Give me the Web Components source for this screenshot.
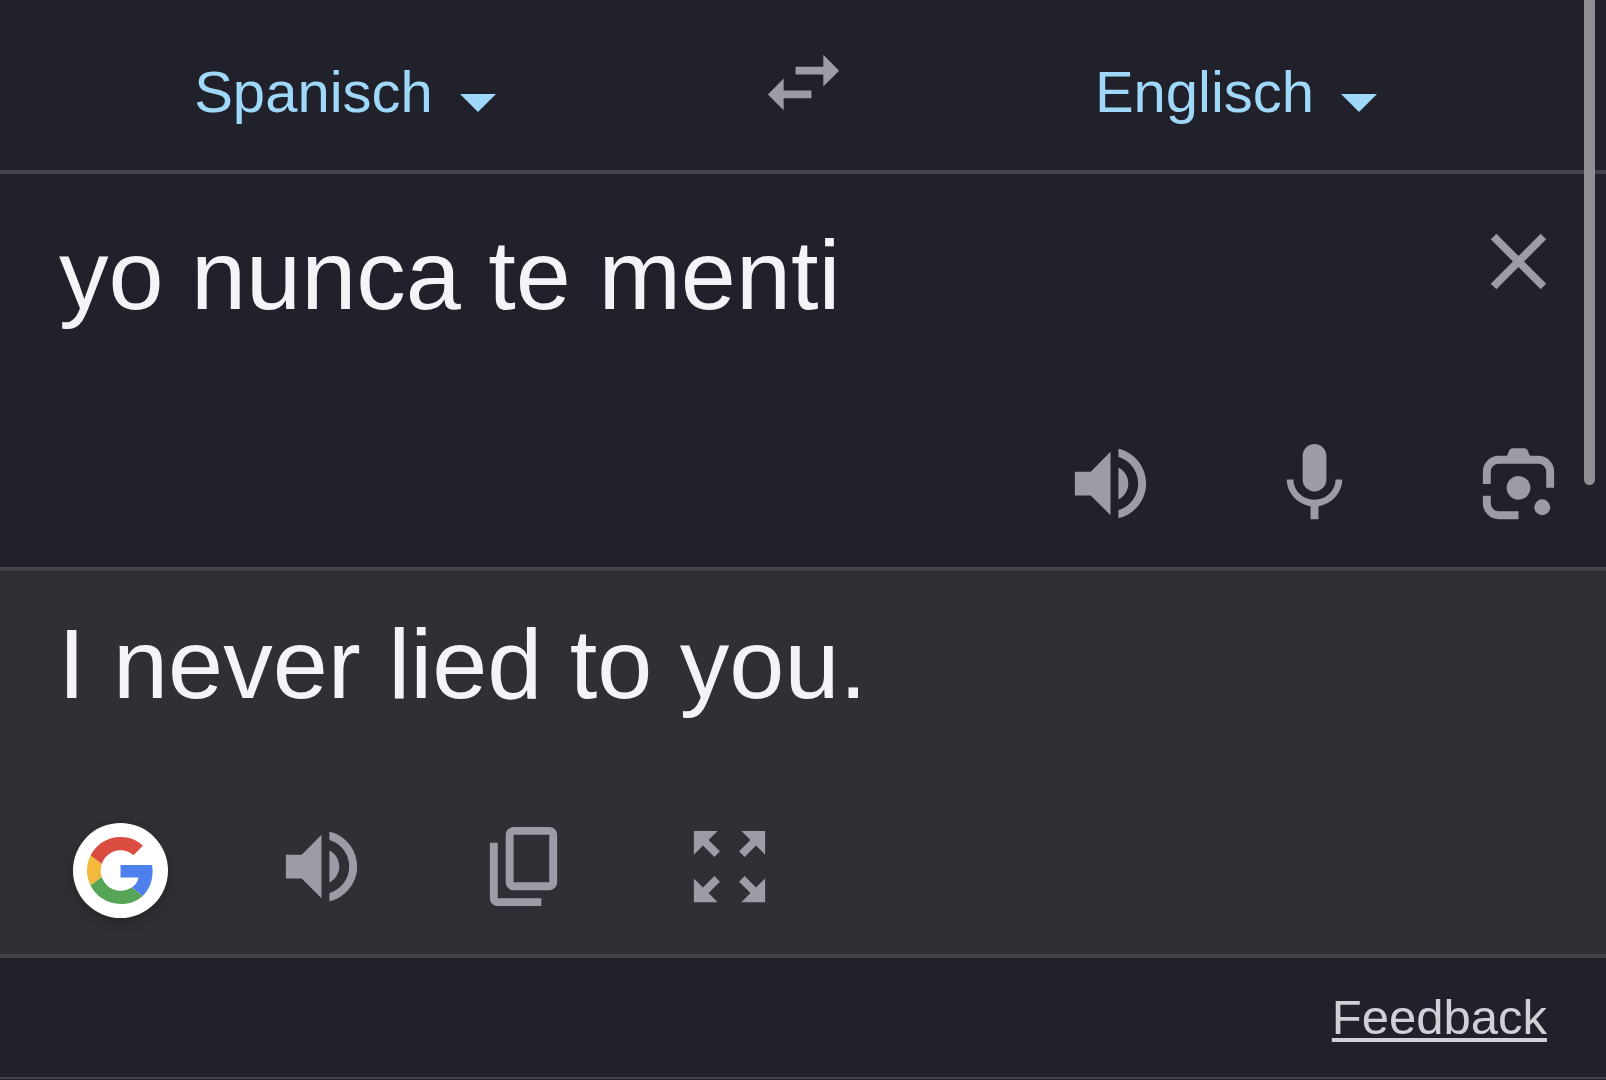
<!DOCTYPE html>
<html lang="de">
<head>
<meta charset="utf-8">
<meta name="viewport" content="width=device-width, initial-scale=1">
<title>Übersetzer</title>
<style>
  :root {
    --bg: #20212a;
    --surface: #2f3035;
    --line: #434348;
    --icon: #9c9ca6;
    --text: #f4f4f8;
    --accent: #a0d8fa;
    --link: #d0d0d6;
  }
  html { background: var(--bg); }
  body { margin: 0; font-family: "Liberation Sans", Arial, sans-serif; color: var(--text); }
</style>
</head>
<body>
<translate-card></translate-card>

<script>
const ICONS = {
  swap: '<path d="M6.99 11L3 15l3.99 4v-3H14v-2H6.99v-3zM21 9l-3.99-4v3H10v2h7.01v3L21 9z"/>',
  close: '<path d="M19 6.41L17.59 5 12 10.59 6.41 5 5 6.41 10.59 12 5 17.59 6.41 19 12 13.41 17.59 19 19 17.59 13.41 12z"/>',
  volume: '<path d="M3 9v6h4l5 5V4L7 9H3zM16.5 12c0-1.77-1.02-3.29-2.5-4.03v8.05c1.48-.73 2.5-2.25 2.5-4.02zM14 3.23v2.06c2.89.86 5 3.54 5 6.71s-2.11 5.85-5 6.71v2.06c4.01-.91 7-4.49 7-8.77s-2.99-7.86-7-8.77z"/>',
  mic: '<path d="M12 14c1.66 0 3-1.34 3-3V5c0-1.66-1.34-3-3-3S9 3.34 9 5v6c0 1.66 1.34 3 3 3zm5.3-3c0 3-2.54 5.1-5.3 5.1S6.7 14 6.7 11H5c0 3.41 2.72 6.23 6 6.72V21h2v-3.28c3.28-.48 6-3.3 6-6.72h-1.7z"/>',
  lens: '<path d="M4 12.1V9a3 3 0 0 1 3-3h10a3 3 0 0 1 3 3v4.1M4 15.1V17a3 3 0 0 0 3 3h5" fill="none" stroke="currentColor" stroke-width="2"/><path d="M8.9 5.5l.8-1.9q.25-.5.8-.5h3q.55 0 .8.5l.8 1.9z"/><circle cx="12" cy="13.1" r="3"/><circle cx="18" cy="18" r="2"/>',
  copy: '<path d="M18 2H9c-1.1 0-2 .9-2 2v12c0 1.1.9 2 2 2h9c1.1 0 2-.9 2-2V4c0-1.1-.9-2-2-2zm0 14H9V4h9v12zM3 6h2v14h11v2H5c-1.1 0-2-.9-2-2z"/>',
  expand: '<path d="M15 3l2.3 2.3-2.89 2.87 1.42 1.42L18.7 6.7 21 9V3h-6zM3 9l2.3-2.3 2.87 2.89 1.42-1.42L6.7 5.3 9 3H3v6zm6 12l-2.3-2.3 2.89-2.87-1.42-1.42L5.3 17.3 3 15v6h6zm12-6l-2.3 2.3-2.87-2.89-1.42 1.42 2.89 2.87L15 21h6v-6z"/>'
};

class IconButton extends HTMLElement {
  constructor() {
    super();
    this.attachShadow({ mode: 'open' });
  }
  connectedCallback() {
    this.shadowRoot.innerHTML = `
      <style>
        :host { display: block; flex: none; width: 95px; height: 95px; }
        button { display: block; width: 100%; height: 100%; margin: 0; padding: 0; border: 0; background: none; color: var(--icon); cursor: pointer; }
        svg { display: block; width: 100%; height: 100%; fill: currentColor; }
      </style>
      <button type="button" aria-label="${this.getAttribute('label')}">
        <svg viewBox="0 0 24 24" aria-hidden="true">${ICONS[this.getAttribute('icon')]}</svg>
      </button>`;
  }
}
customElements.define('icon-button', IconButton);

class LanguageSelect extends HTMLElement {
  constructor() {
    super();
    this.attachShadow({ mode: 'open' });
  }
  connectedCallback() {
    const value = this.getAttribute('value');
    this.shadowRoot.innerHTML = `
      <style>
        :host { display: flex; justify-content: center; }
        label { display: flex; align-items: baseline; gap: 27px; color: var(--accent); cursor: pointer; }
        select { appearance: none; field-sizing: content; margin: 0; padding: 0; border: 0; outline: 0; background: none; color: inherit; font: 58px/76px "Liberation Sans", Arial, sans-serif; cursor: pointer; }
        svg { display: block; flex: none; width: 36px; height: 18px; fill: currentColor; }
      </style>
      <label>
        <select aria-label="${this.getAttribute('label')}"><option selected>${value}</option></select>
        <svg viewBox="0 0 36 18" aria-hidden="true"><path d="M0 0h36L18 18z"/></svg>
      </label>`;
  }
}
customElements.define('language-select', LanguageSelect);

class LanguageBar extends HTMLElement {
  constructor() {
    super();
    this.attachShadow({ mode: 'open' }).innerHTML = `
      <style>
        :host { display: grid; grid-template-columns: 1fr 226px 1fr; align-items: end; justify-items: center; padding: 35px 0 40px; border-bottom: 4px solid var(--line); }
        .to { padding-right: 50px; }
      </style>
      <language-select label="Ausgangssprache" value="Spanisch"></language-select>
      <icon-button icon="swap" label="Sprachen tauschen"></icon-button>
      <language-select class="to" label="Zielsprache" value="Englisch"></language-select>`;
  }
}
customElements.define('language-bar', LanguageBar);

class SourcePanel extends HTMLElement {
  constructor() {
    super();
    this.attachShadow({ mode: 'open' }).innerHTML = `
      <style>
        :host { display: block; padding: 40px 40px 36px 59px; border-bottom: 4px solid var(--line); }
        .entry { display: flex; align-items: flex-start; }
        textarea { display: block; flex: 1; min-width: 0; height: 222px; box-sizing: border-box; margin: 0; padding: 0; border: 0; outline: 0; resize: none; overflow: hidden; background: none; color: var(--text); font: 99px/122px "Liberation Sans", Arial, sans-serif; }
        .actions { display: flex; justify-content: flex-end; gap: 109px; }
      </style>
      <div class="entry">
        <textarea aria-label="Ausgangstext" spellcheck="false">yo nunca te menti</textarea>
        <icon-button icon="close" label="Text löschen"></icon-button>
      </div>
      <div class="actions">
        <icon-button icon="volume" label="Anhören"></icon-button>
        <icon-button icon="mic" label="Spracheingabe"></icon-button>
        <icon-button icon="lens" label="Kamera"></icon-button>
      </div>`;
  }
}
customElements.define('source-panel', SourcePanel);

class SearchBadge extends HTMLElement {
  constructor() {
    super();
    this.attachShadow({ mode: 'open' }).innerHTML = `
      <style>
        :host { display: block; flex: none; }
        button { display: block; width: 95px; height: 95px; margin: 0; padding: 14px; border: 0; border-radius: 50%; background: #fff; box-shadow: 0 4px 12px rgba(0, 0, 0, .25); cursor: pointer; }
        svg { display: block; width: 100%; height: 100%; }
      </style>
      <button type="button" aria-label="Google">
        <svg viewBox="0 0 48 48" aria-hidden="true">
          <path fill="#d94c3f" d="M24 9.5c3.54 0 6.71 1.22 9.21 3.6l6.85-6.85C35.9 2.38 30.47 0 24 0 14.62 0 6.51 5.38 2.56 13.22l7.98 6.19C12.43 13.72 17.74 9.5 24 9.5z"/>
          <path fill="#4d80ec" d="M46.98 24.55c0-1.57-.15-3.09-.38-4.55H24v9.02h12.94c-.58 2.96-2.26 5.48-4.78 7.18l7.73 6c4.51-4.18 7.09-10.36 7.09-17.65z"/>
          <path fill="#f2b93c" d="M10.53 28.59c-.48-1.45-.76-2.99-.76-4.59s.27-3.14.76-4.59l-7.98-6.19C.92 16.46 0 20.12 0 24c0 3.88.92 7.54 2.56 10.78l7.97-6.19z"/>
          <path fill="#56a556" d="M24 48c6.48 0 11.93-2.13 15.89-5.81l-7.73-6c-2.15 1.45-4.92 2.3-8.16 2.3-6.26 0-11.57-4.22-13.47-9.91l-7.98 6.19C6.51 42.62 14.62 48 24 48z"/>
        </svg>
      </button>`;
  }
}
customElements.define('search-badge', SearchBadge);

class ResultPanel extends HTMLElement {
  constructor() {
    super();
    this.attachShadow({ mode: 'open' }).innerHTML = `
      <style>
        :host { display: block; padding: 32px 58px 36px; background: var(--surface); border-bottom: 4px solid var(--line); }
        p { margin: 0 0 94px; font-size: 99px; line-height: 122px; }
        .row { display: flex; align-items: flex-start; gap: 106px; padding-left: 15px; }
        .actions { display: flex; gap: 109px; }
        search-badge { margin-top: 4px; }
      </style>
      <p lang="en"><slot></slot></p>
      <div class="row">
        <search-badge></search-badge>
        <div class="actions">
          <icon-button icon="volume" label="Übersetzung anhören"></icon-button>
          <icon-button icon="copy" label="Kopieren"></icon-button>
          <icon-button icon="expand" label="Vollbild"></icon-button>
        </div>
      </div>`;
  }
}
customElements.define('result-panel', ResultPanel);

class CardFooter extends HTMLElement {
  constructor() {
    super();
    this.attachShadow({ mode: 'open' }).innerHTML = `
      <style>
        :host { display: flex; justify-content: flex-end; padding: 29px 59px 30px; border-bottom: 2px solid var(--line); }
        a { color: var(--link); font-size: 49px; line-height: 60px; text-decoration: underline; text-decoration-thickness: 4px; text-underline-offset: 4px; text-decoration-skip-ink: none; }
      </style>
      <a href="#feedback">Feedback</a>`;
  }
}
customElements.define('card-footer', CardFooter);

class TranslateCard extends HTMLElement {
  constructor() {
    super();
    this.attachShadow({ mode: 'open' }).innerHTML = `
      <style>
        :host { display: block; position: relative; background: var(--bg); }
        .thumb { position: absolute; top: 0; right: 11px; width: 11px; height: 485px; border-radius: 0 0 6px 6px; background: #8f8f93; }
      </style>
      <language-bar></language-bar>
      <source-panel></source-panel>
      <result-panel>I never lied to you.</result-panel>
      <card-footer></card-footer>
      <div class="thumb"></div>`;
  }
}
customElements.define('translate-card', TranslateCard);
</script>
</body>
</html>
